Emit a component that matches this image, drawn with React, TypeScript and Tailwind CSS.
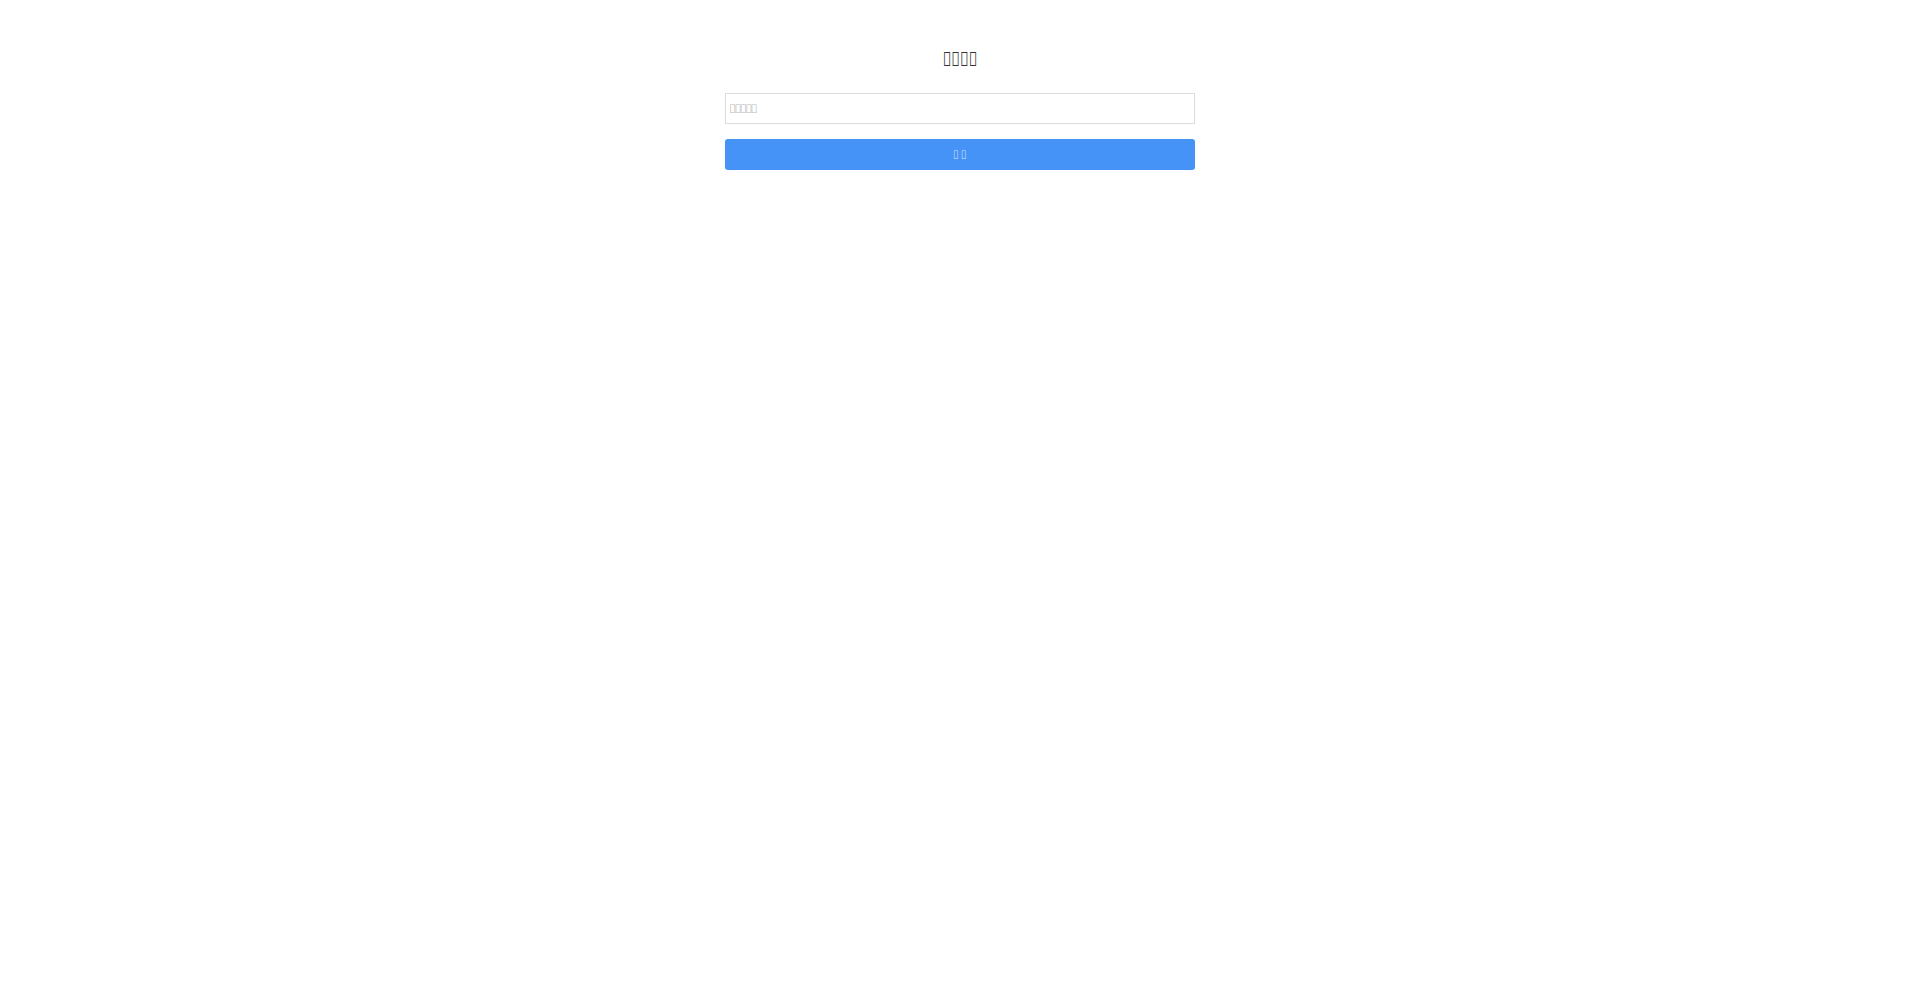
import React from "react";

export default function App() {
  return (
    <div className="min-h-[993px] w-full bg-white" style={{ fontFamily: '"Noto Sans", sans-serif' }}>
      <div className="mx-auto w-[470px] pt-[45px]">
        <h2 className="text-center text-[20px] leading-[27px] font-normal text-[#333]">
          <span className="inline-block scale-x-[0.72]">{"\uE000\uE001\uE002\uE003"}</span>
        </h2>
        <input
          className="mt-[21px] block h-[31px] w-full border border-[#dcdcdc] bg-white px-[3px] text-[12px] tracking-[-1.8px] text-[#333] outline-none placeholder:text-[#bbb]"
          placeholder={"\uE004\uE005\uE006\uE007\uE008"}
        />
        <button className="mt-[15px] block h-[31px] w-full rounded-[3px] bg-[#4593f6] text-[12px] text-[#dbe9fd]">
          <span className="inline-block scale-x-[0.75]">{"\uE009 \uE00A"}</span>
        </button>
      </div>
    </div>
  );
}
